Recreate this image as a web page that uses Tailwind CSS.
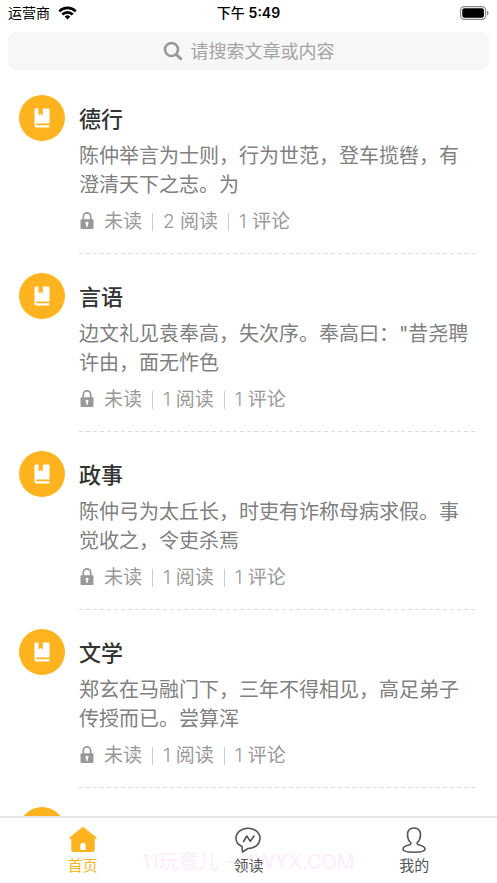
<!DOCTYPE html>
<html lang="zh-CN">
<head>
<meta charset="utf-8">
<meta name="viewport" content="width=device-width, initial-scale=1">
<title>首页</title>
<script src="https://cdn.jsdelivr.net/npm/@tailwindcss/browser@4"></script>
</head>
<body class="bg-white font-['Inter','Noto_Sans_CJK_SC',sans-serif]">
<svg class="hidden">
  <symbol id="book" viewBox="0 0 16 20">
    <path fill="#fff" d="M1.500 .5H4.500V7.500L6.500 6 8.800 7.500V.5H14.500a1 1 0 0 1 1 1V15.500H3c-1.200 0-1.200 1.700 0 1.700H15.500V18.500a1 1 0 0 1-1 1H2.500a2 2 0 0 1-2-2V1.500a1 1 0 0 1 1-1z"/>
  </symbol>
  <symbol id="lock" viewBox="0 0 14 18">
    <path fill="none" stroke="#999" stroke-width="1.700" d="M3.300 8V4.500a3.700 3.700 0 0 1 7.400 0v3.500"/>
    <path fill="#999" fill-rule="evenodd" d="M1.500 7.200h11a1 1 0 0 1 1 1v7.800a1 1 0 0 1-1 1h-11a1 1 0 0 1-1-1V8.200a1 1 0 0 1 1-1zM7 9.700a1.500 1.500 0 0 0-.8 2.800v2.200h1.600v-2.200A1.500 1.500 0 0 0 7 9.700z"/>
  </symbol>
</svg>
<div class="flex h-screen flex-col">
  <header class="shrink-0">
    <div class="grid h-8 grid-cols-3 items-center px-2 pb-1.5 text-sm text-black">
      <div class="flex items-center gap-2">
        <span>运营商</span>
        <svg class="h-[14px] w-[19px]" viewBox="0 0 19 14" aria-label="Wi-Fi">
          <g fill="none" stroke="#000" stroke-width="2.600"><path d="M1.300 5.300a11.600 11.600 0 0 1 16.400 0"/><path d="M4.300 8.500a7.400 7.400 0 0 1 10.400 0"/></g>
          <path d="M9.500 13.500 6.700 10.700a4 4 0 0 1 5.600 0z"/>
        </svg>
      </div>
      <div class="text-center font-medium">下午 <span class="font-semibold">5:49</span></div>
      <svg class="h-[14px] w-[29px] justify-self-end" viewBox="0 0 29 14" aria-label="电量">
        <rect x=".6" y=".6" width="25" height="12.800" rx="3.600" fill="none" stroke="#888" stroke-width="1.100"/>
        <rect x="2.300" y="2.300" width="21.600" height="9.400" rx="2"/>
        <path fill="#888" d="M27 4.700c2 .6 2 4 0 4.600z"/>
      </svg>
    </div>
    <label class="mx-2 flex h-[38px] items-center justify-center gap-2 rounded-lg bg-[#f6f8f8]">
      <svg class="size-5" viewBox="0 0 20 20" fill="none" stroke="#999" stroke-linecap="round" aria-hidden="true"><circle cx="8.500" cy="8.500" r="6.500" stroke-width="2.600"/><path stroke-width="3" d="m13.700 13.700 4 4"/></svg>
      <input type="text" aria-label="搜索" placeholder="请搜索文章或内容" class="w-36 bg-transparent pt-0.5 text-lg text-gray-700 outline-none placeholder:text-[#a3a3a3]">
    </label>
  </header>
  <main id="list" class="min-h-0 flex-1 overflow-hidden pt-[7px]"></main>
  <nav class="relative grid h-[67px] shrink-0 grid-cols-3 border-t-2 border-[#e5e5e5] bg-white text-[15px] leading-5 text-[#555]">
    <div class="pointer-events-none absolute inset-x-0 top-8 text-center text-xl leading-6 text-[#fdecfd]">11玩意儿 - 11WYX.COM</div>
    <a href="#" class="relative flex flex-col items-center gap-0.5 pt-2 text-[#ffb31f]">
      <svg class="h-7 w-7" viewBox="0 0 28 28" fill="currentColor" aria-hidden="true"><path fill-rule="evenodd" d="M13 1.500Q14 .7 15 1.500L27.500 11.500Q28.200 12.800 26.500 12.800H25.700V24a2 2 0 0 1-2 2H4.300a2 2 0 0 1-2-2V12.800H1.500Q-.2 12.800.5 11.500zM11.300 24h5.400V19.500a2.700 2.700 0 0 0-5.400 0z"/></svg>
      <span>首页</span>
    </a>
    <a href="#" class="relative flex flex-col items-center gap-0.5 pt-2">
      <svg class="h-7 w-7" viewBox="0 0 28 28" fill="none" stroke="currentColor" stroke-width="1.600" stroke-linejoin="round" stroke-linecap="round" aria-hidden="true"><path d="M8 20.500C4 18.800 2 16 2 12.300 2 6.600 7.200 2.300 14 2.300s12 4.300 12 10-5 10.200-12 10.200L8.500 26z"/><path d="m9.500 15.500 3.300-5.500 3.500 5.300 3.700-5.300"/></svg>
      <span>领读</span>
    </a>
    <a href="#" class="relative flex flex-col items-center gap-0.5 pt-2">
      <svg class="h-7 w-7" viewBox="0 0 28 28" fill="none" stroke="currentColor" stroke-width="1.600" stroke-linejoin="round" aria-hidden="true"><path d="M14 2C9.500 2 7.500 4.500 7.500 9c0 4 1.500 6 3 7.500.8 1 .5 1.700-.8 2.200C6 19.500 3 20.500 3 23c0 2.300 4 3.300 11 3.300s11-1 11-3.300c0-2.500-3-3.500-6.700-4.300-1.300-.5-1.600-1.200-.8-2.200 1.500-1.500 3-3.500 3-7.500C20.500 4.500 18.500 2 14 2z"/></svg>
      <span>我的</span>
    </a>
  </nav>
</div>
<script>
const items = [
  ['德行', '陈仲举言为士则，行为世范，登车揽辔，有澄清天下之志。为', 2, 1],
  ['言语', '边文礼见袁奉高，失次序。奉高曰："昔尧聘许由，面无怍色', 1, 1],
  ['政事', '陈仲弓为太丘长，时吏有诈称母病求假。事觉收之，令吏杀焉', 1, 1],
  ['文学', '郑玄在马融门下，三年不得相见，高足弟子传授而已。尝算浑', 1, 1],
];
const icon = '<div class="flex size-[46px] shrink-0 items-center justify-center rounded-full bg-[#ffb31f]"><svg class="h-5 w-4" aria-hidden="true"><use href="#book"/></svg></div>';
document.getElementById('list').innerHTML = items.map(([title, text, reads, comments]) => `
  <article class="flex gap-3.5 pl-[19px] pr-[21px] pt-[18px] pb-px">
    ${icon}
    <div class="min-w-0 flex-1">
      <h2 class="pt-[9px] text-[22px] leading-[30px] font-medium text-[#333]">${title}</h2>
      <p class="pt-2 text-xl leading-[29px] text-[#808080]">${text}</p>
      <div class="mt-2 flex h-7 items-center gap-2.5 text-[19px] text-[#999]">
        <span class="flex items-center gap-[9px]"><svg class="mb-0.5 h-[18px] w-4" aria-label="锁"><use href="#lock"/></svg>未读</span>
        <span class="h-[18px] w-px bg-[#ccc]"></span><span class="font-light">${reads} <span class="font-normal">阅读</span></span>
        <span class="h-[18px] w-px bg-[#ccc]"></span><span class="font-light">${comments} <span class="font-normal">评论</span></span>
      </div>
      <div class="mt-[17px] h-px bg-[repeating-linear-gradient(90deg,#ddd_0_4px,transparent_4px_7px)]"></div>
    </div>
  </article>`).join('') + `<article class="flex pl-[19px] pt-[18px]">${icon}</article>`;
</script>
</body>
</html>
